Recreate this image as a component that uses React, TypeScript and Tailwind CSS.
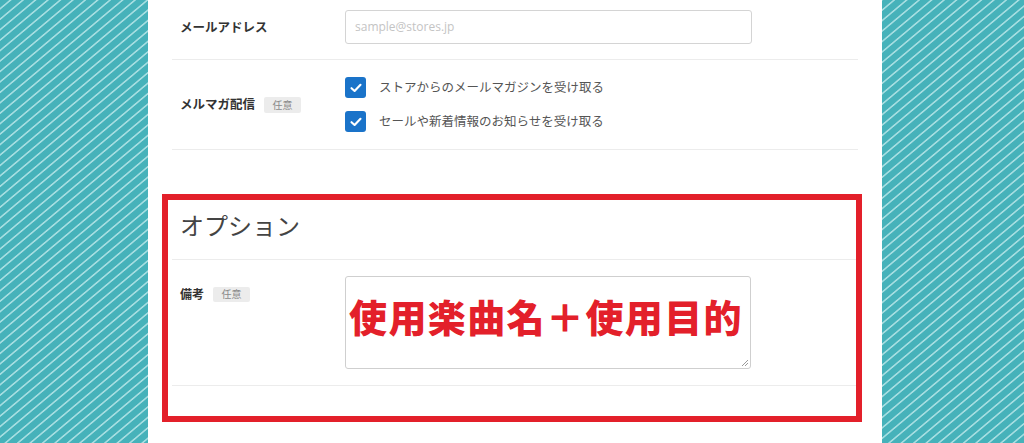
import React from "react";

const jp = { fontFamily: '"Noto Sans CJK JP", "Noto Sans", sans-serif' };

function Badge() {
  return (
    <span className="inline-flex h-[16px] w-[37px] items-center justify-center rounded-[2px] bg-[#ececec] text-[10px] leading-none text-[#8a8a8a]">
      任意
    </span>
  );
}

function Check({ label }: { label: string }) {
  return (
    <div className="flex h-[21px] items-center gap-[13px]">
      <span className="flex h-[21px] w-[21px] items-center justify-center rounded-[3px] bg-[#1a73c9]">
        <svg width="12" height="10" viewBox="0 0 12 10" fill="none">
          <path d="M1.5 5.2 L4.6 8 L10.5 1.8" stroke="white" strokeWidth="2.1" strokeLinecap="round" strokeLinejoin="round" />
        </svg>
      </span>
      <span className="text-[12.5px] text-[#555555]">{label}</span>
    </div>
  );
}

export default function App() {
  return (
    <div
      style={jp}
      className="relative h-[443px] w-[1024px] overflow-hidden bg-[repeating-linear-gradient(140deg,#46b2ba_0px,#46b2ba_5.6px,#a6dee1_6.4px,#a6dee1_7.2px,#46b2ba_8px)]"
    >
      <div className="ml-[148px] h-full w-[734px] bg-white px-[24px]">
        {/* email row */}
        <div className="flex h-[60px] border-b border-[#ececec] pt-[10px]">
          <div className="flex h-[34px] w-[173px] items-center pl-[8px] text-[12.5px] font-bold text-[#333333]">
            メールアドレス
          </div>
          <div className="flex h-[34px] w-[407px] items-center rounded-[3px] border border-[#d4d4d4] px-[9px] text-[12px] text-[#c4c4c4]" style={{ fontFamily: '"Open Sans", "Noto Sans", sans-serif' }}>
            sample@stores.jp
          </div>
        </div>

        {/* newsletter row */}
        <div className="flex border-b border-[#ececec] py-[17px]">
          <div className="flex w-[173px] items-center gap-[9px] pl-[8px]">
            <span className="text-[12.5px] font-bold text-[#333333]">メルマガ配信</span>
            <Badge />
          </div>
          <div className="flex flex-col gap-[13px]">
            <Check label="ストアからのメールマガジンを受け取る" />
            <Check label="セールや新着情報のお知らせを受け取る" />
          </div>
        </div>

        {/* option section */}
        <div className="mt-[41px] flex h-[69px] items-center border-b border-[#ececec] pl-[8px] text-[24px] font-normal text-[#444444]">
          オプション
        </div>
        <div className="flex border-b border-[#ececec] py-[16px]">
          <div className="flex h-[36px] w-[173px] items-center gap-[9px] pl-[8px]">
            <span className="text-[12px] font-bold text-[#333333]">備考</span>
            <span className="inline-flex h-[15px] w-[37px] items-center justify-center rounded-[2px] bg-[#ececec] text-[10px] leading-none text-[#8a8a8a]">
              任意
            </span>
          </div>
          <div className="relative flex h-[93px] w-[406px] items-center rounded-[3px] border border-[#cfcfcf] pb-[13px] pl-[3px]">
            <span className="text-[38px] font-black leading-none tracking-[1.4px] text-[#e3202a]">
              使用楽曲名＋使用目的
            </span>
            <svg className="absolute bottom-[1px] right-[1px]" width="9" height="9" viewBox="0 0 9 9">
              <path d="M8 2 L2 8 M8 5 L5 8" stroke="#9a9a9a" strokeWidth="1" />
            </svg>
          </div>
        </div>
      </div>

      {/* red annotation frame */}
      <div className="absolute left-[162px] top-[194px] h-[228px] w-[700px] border-[6px] border-[#e3202a]" />
    </div>
  );
}
